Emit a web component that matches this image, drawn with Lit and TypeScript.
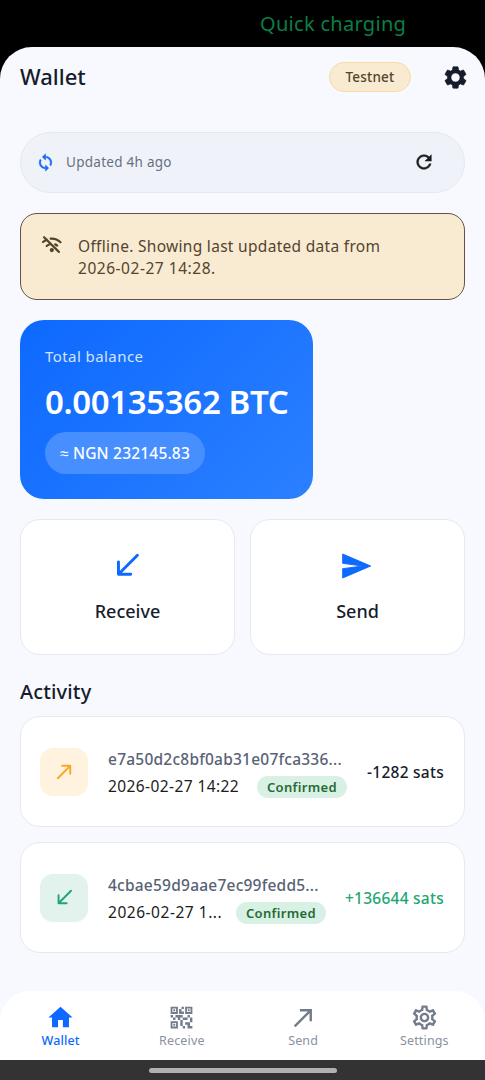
import { LitElement, html, css, svg } from "lit";
import { customElement } from "lit/decorators.js";

const gearFilled = "M19.14 12.94c.04-.3.06-.61.06-.94 0-.32-.02-.64-.07-.94l2.03-1.58c.18-.14.23-.41.12-.61l-1.92-3.32c-.12-.22-.37-.29-.59-.22l-2.39.96c-.5-.38-1.03-.7-1.62-.94l-.36-2.54c-.04-.24-.24-.41-.48-.41h-3.84c-.24 0-.43.17-.47.41l-.36 2.54c-.59.24-1.13.57-1.62.94l-2.39-.96c-.22-.08-.47 0-.59.22L2.74 8.87c-.12.21-.08.47.12.61l2.03 1.58c-.05.3-.09.63-.09.94s.02.64.07.94l-2.03 1.58c-.18.14-.23.41-.12.61l1.92 3.32c.12.22.37.29.59.22l2.39-.96c.5.38 1.03.7 1.62.94l.36 2.54c.05.24.24.41.48.41h3.84c.24 0 .44-.17.47-.41l.36-2.54c.59-.24 1.13-.56 1.62-.94l2.39.96c.22.08.47 0 .59-.22l1.92-3.32c.12-.22.07-.47-.12-.61l-2.01-1.58zM12 16c-2.2 0-4-1.8-4-4s1.8-4 4-4 4 1.800 4 4-1.800 4-4 4z";
const gearOutline = "M19.43 12.98c.04-.32.07-.64.07-.98 0-.34-.03-.66-.07-.98l2.11-1.65c.19-.15.24-.42.12-.64l-2-3.46c-.09-.16-.26-.25-.44-.25-.06 0-.12.01-.17.03l-2.49 1c-.52-.4-1.08-.73-1.69-.98l-.38-2.65C14.46 2.18 14.25 2 14 2h-4c-.25 0-.46.18-.49.42l-.38 2.65c-.61.25-1.17.59-1.69.98l-2.49-1c-.06-.02-.12-.03-.18-.03-.17 0-.34.09-.43.25l-2 3.46c-.13.22-.07.49.12.64l2.11 1.65c-.04.32-.07.65-.07.98 0 .33.03.66.07.98l-2.11 1.65c-.19.15-.24.42-.12.64l2 3.46c.09.16.26.25.44.25.06 0 .12-.01.17-.03l2.49-1c.52.4 1.08.73 1.69.98l.38 2.65c.03.24.24.42.49.42h4c.25 0 .46-.18.49-.42l.38-2.65c.61-.25 1.17-.59 1.69-.98l2.49 1c.06.02.12.03.18.03.17 0 .34-.09.43-.25l2-3.46c.12-.22.07-.49-.12-.64l-2.11-1.65zm-1.98-1.71c.04.31.05.52.05.73 0 .21-.02.43-.05.73l-.14 1.13.89.7 1.08.84-.7 1.21-1.27-.51-1.04-.42-.9.68c-.43.32-.84.56-1.25.73l-1.06.43-.16 1.13-.2 1.35h-1.4l-.19-1.35-.16-1.13-1.06-.43c-.43-.18-.83-.41-1.23-.71l-.91-.7-1.06.43-1.27.51-.7-1.21 1.08-.84.89-.7-.14-1.13c-.03-.31-.05-.54-.05-.74s.02-.43.05-.73l.14-1.13-.89-.7-1.08-.84.7-1.21 1.27.51 1.04.42.9-.68c.43-.32.84-.56 1.25-.73l1.06-.43.16-1.13.2-1.35h1.39l.19 1.35.16 1.13 1.06.43c.43.18.83.41 1.23.71l.91.7 1.06-.43 1.27-.51.7 1.21-1.07.85-.89.7.14 1.13zM12 8c-2.21 0-4 1.79-4 4s1.79 4 4 4 4-1.79 4-4-1.79-4-4-4zm0 6c-1.1 0-2-.9-2-2s.9-2 2-2 2 .9 2 2-.9 2-2 2z";
const sync = "M12 4V1L8 5l4 4V6c3.31 0 6 2.69 6 6 0 1.01-.25 1.97-.7 2.8l1.46 1.46C19.54 15.03 20 13.57 20 12c0-4.42-3.58-8-8-8zm0 14c-3.31 0-6-2.69-6-6 0-1.01.25-1.97.7-2.8L5.24 7.74C4.46 8.97 4 10.43 4 12c0 4.42 3.58 8 8 8v3l4-4-4-4v3z";
const refresh = "M17.65 6.35C16.2 4.9 14.21 4 12 4c-4.42 0-7.99 3.58-7.99 8s3.57 8 7.99 8c3.73 0 6.84-2.55 7.73-6h-2.08c-.82 2.33-3.04 4-5.65 4-3.31 0-6-2.69-6-6s2.69-6 6-6c1.66 0 3.14.69 4.22 1.78L13 11h7V4l-2.35 2.35z";
const send = "M2.01 21 23 12 2.01 3 2 10l15 2-15 2z";
const home = "M10 20v-6h4v6h5v-8h3L12 3 2 12h3v8z";
const qr = "M15 21h-2v-2h2zM13 14h-2v5h2zM21 12h-2v4h2zM19 10h-2v2h2zM7 12H5v2h2zM5 10H3v2h2zM12 5h2V3h-2zM4.5 4.5v3h3v-3zM9 9H3V3h6zM4.5 16.5v3h3v-3zM9 21H3v-6h6zM16.5 4.5v3h3v-3zM21 9h-6V3h6zM19 19v-3h-4v2h2v3h4v-2zM17 12h-4v2h4zM13 10H7v2h2v2h2v-2h2zM14 9V7h-2V5h-2v4zM6.75 5.25h-1.5v1.5h1.5zM6.75 17.25h-1.5v1.5h1.5zM18.75 5.25h-1.5v1.5h1.5z";
const northEast = "M9 5v2h6.59L4 18.59 5.41 20 17 8.41V15h2V5z";

const icon = (d: string, size: number, bold = 0) => html`<svg width=${size} height=${size} viewBox="0 0 24 24" fill="currentColor" stroke="currentColor" stroke-width=${bold} stroke-linejoin="round" fill-rule="evenodd"><path d=${d}></path></svg>`;
const arrow = (size: number, down: boolean) => html`<svg width=${size} height=${size} viewBox="0 0 24 24" fill="none" stroke="currentColor" stroke-width="2" stroke-linecap="round" stroke-linejoin="round">
  ${down ? svg`<path d="M18.800 5 5.800 18M5.800 9.600V18h8.400"></path>` : svg`<path d="M5 19 18 6M9.600 6H18v8.400"></path>`}</svg>`;
const wifiOff = html`<svg width="22" height="22" viewBox="0 0 24 24" fill="none" stroke="currentColor" stroke-width="2.4" stroke-linecap="round">
  <path d="M3.300 3.500 19.500 19.500M2.200 8.800c1.300-1.200 2.600-2 4.200-2.600M10.500 5c4-.3 7.700 1 10.800 4M6.200 13.100c1.100-1.100 2.400-1.800 4-2.200M15.500 11.300c.8.300 1.500.8 2.200 1.400"></path><circle cx="11.800" cy="17.500" r="1.100" fill="currentColor"></circle></svg>`;

interface Tx { id: string; date: string; amount: string; incoming: boolean; }
const transactions: Tx[] = [
  { id: "e7a50d2c8bf0ab31e07fca336...", date: "2026-02-27 14:22", amount: "-1282 sats", incoming: false },
  { id: "4cbae59d9aae7ec99fedd5...", date: "2026-02-27 1...", amount: "+136644 sats", incoming: true },
];

@customElement("app-root")
export class AppRoot extends LitElement {
  static styles = css`
    :host { display: flex; flex-direction: column; height: 1080px; background: #000; color: #161c2c; font-family: "Noto Sans", sans-serif; overflow: hidden; white-space: nowrap; }
    * { box-sizing: border-box; }
    svg { display: block; flex: none; }
    .status { height: 47px; flex: none; padding-left: 260px; line-height: 47px; font-size: 20px; letter-spacing: .3px; color: #0b7f46; }
    .screen { flex: 1; min-height: 0; display: flex; flex-direction: column; background: #f8f9fe; border-radius: 32px 32px 0 0; }
    header { height: 60px; display: flex; align-items: center; padding: 0 16px 0 20px; }
    .title { flex: 1; font-size: 22px; font-weight: 500; padding-bottom: 2px; }
    .net { width: 82px; height: 30px; border: 1px solid #f8dca0; border-radius: 15px; background: #f8ebd2; color: #54432f; display: grid; place-items: center; font-size: 13.500px; font-weight: 500; letter-spacing: .2px; margin-right: 31px; }
    main { padding: 25px 20px 0; display: flex; flex-direction: column; flex: 1; }
    .sync { height: 61px; border: 1px solid #e4e8ef; border-radius: 31px; background: #eff3f9; display: flex; align-items: center; padding: 0 29px 1px 15px; font-size: 13.500px; color: #68707f; }
    .sync .blue { color: #1769f5; margin-right: 11px; }
    .sync span { flex: 1; letter-spacing: .27px; }
    .sync .dark { color: #1b1c20; }
    .offline { margin-top: 20px; height: 87px; border: 1.500px solid #63524a; border-radius: 17px; background: #f8ebd2; color: #54432f; display: flex; gap: 15px; padding: 20px; font-size: 15.500px; line-height: 22px; letter-spacing: .3px; }
    .msg { padding-top: 1px; }
    .stamp { letter-spacing: .53px; }
    .balance { margin-top: 20px; width: 293px; height: 179px; border-radius: 24px; background: linear-gradient(135deg, #0d69ff, #2b80ff); color: #fff; padding: 24px 25px; display: flex; flex-direction: column; align-items: flex-start; }
    .caption { font-size: 15px; line-height: 24px; letter-spacing: .43px; color: #d3e4ff; }
    .amount { font-size: 33px; line-height: 44px; margin-top: 12px; font-weight: 600; letter-spacing: -.36px; }
    .fiat { margin-top: 8px; height: 42px; width: 160px; border-radius: 21px; background: #478fff; display: grid; place-items: center; font-size: 15.500px; font-weight: 500; letter-spacing: .2px; }
    .actions { margin-top: 20px; display: grid; grid-template-columns: 1fr 1fr; gap: 15px; }
    .action, .tx { background: #fff; border: 1px solid #e5e9f2; border-radius: 20px; }
    .action { height: 136px; display: flex; flex-direction: column; align-items: center; padding-top: 28px; font-size: 18px; line-height: 24px; font-weight: 500; gap: 16px; }
    .glyph { height: 35px; display: grid; place-items: center; color: #0d69ff; }
    .plane { padding-right: 3px; }
    h2 { margin: 24px 0 12px; font-size: 20px; line-height: 25px; font-weight: 500; letter-spacing: .15px; }
    .list { display: flex; flex-direction: column; gap: 15px; }
    .tx { height: 111px; display: flex; align-items: center; padding: 0 20px 0 19px; }
    .badge { width: 48px; height: 48px; border-radius: 13px; display: grid; place-items: center; background: #fff3df; color: #f9a825; margin-right: 20px; }
    .in .badge { background: #e1f3ec; color: #1da672; }
    .info { flex: 1; min-width: 0; font-size: 15.500px; line-height: 27px; padding-top: 3px; }
    .id { font-weight: 500; color: #596275; letter-spacing: .23px; }
    .row { display: flex; align-items: center; color: #1b1c20; }
    .date { width: 149px; letter-spacing: .41px; }
    .in .date { width: 128px; letter-spacing: .53px; }
    .chip { width: 90px; height: 22px; border-radius: 11px; background: #d9f1e4; color: #256a35; display: grid; place-items: center; font-size: 13px; font-weight: 600; letter-spacing: .35px; line-height: 20px; }
    .sats { font-size: 15.500px; font-weight: 500; letter-spacing: .26px; }
    .in .sats { color: #1da672; }
    nav { height: 69px; display: grid; grid-template-columns: repeat(4, 1fr); background: #fff; border-radius: 30px 30px 0 0; }
    .tab { display: flex; flex-direction: column; align-items: center; padding-top: 12px; gap: 1px; font-size: 12.500px; line-height: 16px; letter-spacing: .15px; color: #8a91a0; }
    .tab svg { color: #747c8b; }
    .tab.on, .tab.on svg { color: #0d69ff; }
    .tab.on { font-weight: 500; }
    .gesture { height: 20px; flex: none; background: #323332; display: grid; place-items: center; }
    .handle { width: 188px; height: 5px; border-radius: 3px; background: #b1b1b1; }
  `;

  render() {
    return html`
      <div class="status">Quick charging</div>
      <div class="screen">
        <header><div class="title">Wallet</div><div class="net">Testnet</div>${icon(gearFilled, 27, 0.5)}</header>
        <main>
          <div class="sync"><div class="blue">${icon(sync, 19, 0.6)}</div><span>Updated 4h ago</span><div class="dark">${icon(refresh, 22, 0.5)}</div></div>
          <div class="offline">${wifiOff}<div class="msg">Offline. Showing last updated data from<br><span class="stamp">2026-02-27 14:28.</span></div></div>
          <section class="balance">
            <div class="caption">Total balance</div>
            <div class="amount">0.00135362 BTC</div>
            <div class="fiat">≈ NGN 232145.83</div>
          </section>
          <div class="actions">
            <div class="action"><div class="glyph">${arrow(35, true)}</div><span>Receive</span></div>
            <div class="action"><div class="glyph plane">${icon(send, 32, 0.7)}</div><span>Send</span></div>
          </div>
          <h2>Activity</h2>
          <div class="list">${transactions.map(t => html`
            <div class="tx ${t.incoming ? "in" : ""}">
              <div class="badge">${arrow(23, t.incoming)}</div>
              <div class="info"><div class="id">${t.id}</div><div class="row"><span class="date">${t.date}</span><span class="chip">Confirmed</span></div></div>
              <div class="sats">${t.amount}</div>
            </div>`)}</div>
        </main>
        <nav>
          <div class="tab on">${icon(home, 29)}<span>Wallet</span></div>
          <div class="tab">${icon(qr, 29)}<span>Receive</span></div>
          <div class="tab">${icon(northEast, 29)}<span>Send</span></div>
          <div class="tab">${icon(gearOutline, 29)}<span>Settings</span></div>
        </nav>
      </div>
      <div class="gesture"><div class="handle"></div></div>`;
  }
}
